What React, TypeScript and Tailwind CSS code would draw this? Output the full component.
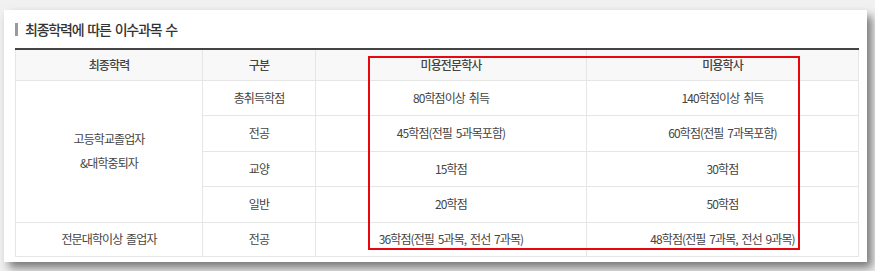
const rows = [
  { sub: "총취득학점", a: "80학점이상 취득", b: "140학점이상 취득" },
  { sub: "전공", a: "45학점(전필 5과목포함)", b: "60학점(전필 7과목포함)" },
  { sub: "교양", a: "15학점", b: "30학점" },
  { sub: "일반", a: "20학점", b: "50학점" },
];

const cell = "border border-[#e6e6e6] text-center align-middle";

export default function App() {
  return (
    <div
      className="w-[875px] h-[271px] overflow-hidden bg-[#f1f1f1] pt-[10px] pl-[4px]"
      style={{ fontFamily: '"Noto Sans CJK KR", "Noto Sans", sans-serif' }}
    >
      <div className="relative w-[863px] h-[252px] bg-white shadow-[5px_6px_9px_rgba(0,0,0,0.5)] pl-[11px] pr-[9px] pt-[11px]">
        {/* section title */}
        <div className="flex items-center h-[16px] mb-[11px]">
          <span className="w-[3px] h-[13px] bg-[#9a9a9a] mr-[7px]" />
          <h3 className="text-[14px] font-medium text-[#333] tracking-[-1.2px] [word-spacing:2px] leading-none">
            최종학력에 따른 이수과목 수
          </h3>
        </div>

        <table className="w-[843px] border-collapse border-t-2 border-t-[#444] text-[12px] text-[#444] tracking-[-0.9px] [word-spacing:2px] table-fixed">
          <colgroup>
            <col className="w-[187px]" />
            <col className="w-[113px]" />
            <col className="w-[271px]" />
            <col className="w-[272px]" />
          </colgroup>
          <thead>
            <tr className="h-[31px] bg-[#f8f8f8]">
              <th className={`${cell} border-t-0 font-medium`}>최종학력</th>
              <th className={`${cell} border-t-0 font-medium`}>구분</th>
              <th className={`${cell} border-t-0 font-medium`}>미용전문학사</th>
              <th className={`${cell} border-t-0 font-medium`}>미용학사</th>
            </tr>
          </thead>
          <tbody>
            {rows.map((r, i) => (
              <tr key={r.sub} className="h-[35.5px]">
                {i === 0 && (
                  <td rowSpan={4} className={`${cell} leading-[24px]`}>
                    고등학교졸업자
                    <br />
                    &amp;대학중퇴자
                  </td>
                )}
                <td className={cell}>{r.sub}</td>
                <td className={cell}>{r.a}</td>
                <td className={cell}>{r.b}</td>
              </tr>
            ))}
            <tr className="h-[34px]">
              <td className={cell}>전문대학이상 졸업자</td>
              <td className={cell}>전공</td>
              <td className={cell}>36학점(전필 5과목, 전선 7과목)</td>
              <td className={cell}>48학점(전필 7과목, 전선 9과목)</td>
            </tr>
          </tbody>
        </table>

        {/* red highlight annotation */}
        <div className="absolute left-[364px] top-[46px] w-[432px] h-[194px] border-2 border-[#e8070e] pointer-events-none" />
      </div>
    </div>
  );
}
